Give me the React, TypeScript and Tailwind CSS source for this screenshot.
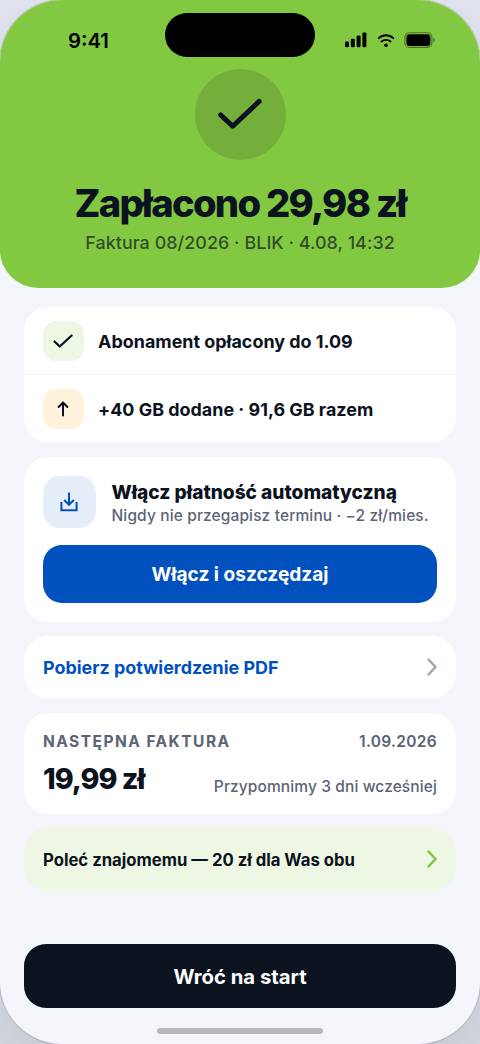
import type { ReactNode } from "react";

type BenefitProps = {
  tint: string;
  icon: ReactNode;
  text: string;
};

function Check({ className = "" }: { className?: string }) {
  return (
    <svg viewBox="0 0 91 91" fill="none" className={className}>
      <path
        d="M25.7 46 37.7 57.2 64.1 32.4"
        stroke="currentColor"
        strokeWidth="5"
        strokeLinecap="round"
        strokeLinejoin="round"
      />
    </svg>
  );
}

function Chevron({ className = "" }: { className?: string }) {
  return (
    <svg width="10" height="18" viewBox="0 0 10 18" fill="none" className={className}>
      <path d="M1.6 1.6 8.5 9 1.6 16.4" stroke="currentColor" strokeWidth="2.5" strokeLinecap="round" strokeLinejoin="round" />
    </svg>
  );
}

function Benefit({ tint, icon, text }: BenefitProps) {
  return (
    <div className="flex h-[67px] items-center gap-[14.5px] px-[19px]">
      <div className={`flex size-[40.6px] items-center justify-center rounded-[13px] ${tint}`}>{icon}</div>
      <span className="pt-[2px] text-[17.9px] leading-[22px] font-bold tracking-[0.001em]">{text}</span>
    </div>
  );
}

function StatusBar() {
  return (
    <div className="flex h-[57px] pt-[13px]">
      <div className="flex w-[165px] justify-center pt-[15px] pl-[12px] text-[20.3px] leading-[26px] font-semibold text-black">
        9:41
      </div>
      <div className="h-[44px] w-[150px] rounded-full bg-black" />
      <div className="flex flex-1 pt-[19px] pl-[30px] text-black">
        <svg width="22" height="16" viewBox="0 0 22 16" fill="currentColor">
          <rect x="0" y="9.6" width="4" height="5.6" rx="1.1" />
          <rect x="5.8" y="6.7" width="4" height="8.5" rx="1.1" />
          <rect x="11.6" y="3.6" width="4" height="11.6" rx="1.1" />
          <rect x="17.4" y="0.5" width="4" height="14.7" rx="1.1" />
        </svg>
        <svg width="18" height="16" viewBox="0 0 18 16" fill="none" stroke="currentColor" strokeWidth="1.9" strokeLinecap="round" className="ml-[10.2px]">
          <path d="M1.8 6.1C5.8 2.3 12.2 2.3 16.2 6.1" />
          <path d="M4.6 9.5C7 7.3 11 7.3 13.4 9.5" />
          <circle cx="9" cy="13.3" r="1.8" fill="currentColor" stroke="none" />
        </svg>
        <svg width="32" height="16" viewBox="0 0 32 16" fill="none" className="ml-[9.3px]">
          <rect x="0.9" y="0.7" width="27" height="14.7" rx="4.4" stroke="currentColor" strokeOpacity="0.45" strokeWidth="1.1" />
          <rect x="2.4" y="2.2" width="24" height="11.7" rx="3" fill="currentColor" />
          <path d="M29.4 5.8v4.6c1.7-.7 1.7-3.9 0-4.6Z" fill="currentColor" fillOpacity="0.5" />
        </svg>
      </div>
    </div>
  );
}

export default function App() {
  return (
    <div className="h-[1044px] w-[480px] overflow-hidden bg-linear-to-b from-[#e2e5ef] to-[#d6dae2] font-['Inter',sans-serif] text-[#0b1220]">
      <div className="flex h-full flex-col overflow-hidden rounded-[62px] bg-[#f3f5fa] shadow-[0_0_0_1px_rgba(0,0,0,0.12),0_24px_60px_rgba(20,30,50,0.1)]">
        <header className="h-[288.4px] shrink-0 rounded-b-[38px] bg-[#82c941]">
          <StatusBar />
          <div className="flex flex-col items-center pt-[12px]">
            <div className="flex size-[91px] items-center justify-center rounded-full bg-[#74af3c]">
              <Check className="size-[91px]" />
            </div>
            <h1 className="mt-[20px] text-[38.2px] leading-[46px] font-extrabold tracking-[-0.045em] whitespace-nowrap">
              Zapłacono 29,98 zł
            </h1>
            <p className="mt-[6px] text-[17.9px] leading-[22px] font-medium tracking-[0.003em] text-[#0b1220]/70">
              Faktura 08/2026 · BLIK · 4.08, 14:32
            </p>
          </div>
        </header>

        <main className="mt-[19px] flex flex-col gap-[14.4px] px-[24px]">
          <section className="rounded-[24px] bg-white">
            <Benefit
              tint="bg-[#edf7e3]"
              icon={<Check className="size-[40.6px]" />}
              text="Abonament opłacony do 1.09"
            />
            <div className="h-px bg-[#f1f3f7]" />
            <Benefit
              tint="bg-[#fff2db]"
              icon={
                <svg width="12" height="16" viewBox="0 0 12 16" fill="none" className="text-[#0b1220]">
                  <path d="M6 14.6V1.6M1.6 6 6 1.5 10.4 6" stroke="currentColor" strokeWidth="2" strokeLinecap="round" strokeLinejoin="round" />
                </svg>
              }
              text="+40 GB dodane · 91,6 GB razem"
            />
          </section>

          <section className="h-[165px] rounded-[24px] bg-white px-[19px] pt-[19px]">
            <div className="flex items-center gap-[16px]">
              <div className="flex size-[52.5px] shrink-0 items-center justify-center rounded-[17px] bg-[#e6eefa] text-[#0050be]">
                <svg width="18" height="20" viewBox="0 0 18 20" fill="none" stroke="currentColor" strokeWidth="2">
                  <path d="M9 .4v12M4.2 8 9 12.8 13.8 8" />
                  <path d="M1.4 10v8.2h15.2V10" />
                </svg>
              </div>
              <div className="pt-[3px] whitespace-nowrap">
                <h2 className="text-[19.1px] leading-[23px] font-extrabold">Włącz płatność automatyczną</h2>
                <p className="text-[15.5px] leading-[23px] font-medium tracking-[0.008em] text-[#5b6476]">
                  Nigdy nie przegapisz terminu · −2 zł/mies.
                </p>
              </div>
            </div>
            <button className="mt-[17px] flex h-[57.3px] w-full items-center justify-center rounded-[19px] bg-[#0050be] pt-px text-[19.1px] font-bold text-white">
              Włącz i oszczędzaj
            </button>
          </section>

          <section className="flex h-[62px] items-center justify-between rounded-[24px] bg-white px-[19px]">
            <span className="pt-[3px] text-[17.9px] font-bold text-[#0050be]">Pobierz potwierdzenie PDF</span>
            <Chevron className="text-[#9fa8b6]" />
          </section>

          <section className="h-[101.3px] rounded-[24px] bg-white px-[19px] pt-[18px]">
            <div className="flex items-center justify-between text-[15.5px] leading-[22px] font-semibold text-[#5b6476]">
              <span className="font-bold tracking-[0.095em]">NASTĘPNA FAKTURA</span>
              <span className="tracking-[0.02em]">1.09.2026</span>
            </div>
            <div className="mt-[9px] flex items-end justify-between">
              <span className="text-[28.7px] leading-[34px] font-extrabold tracking-[-0.035em]">19,99 zł</span>
              <span className="-mb-[2px] text-[15.5px] leading-[22px] font-medium tracking-[0.007em] text-[#5b6476]">Przypomnimy 3 dni wcześniej</span>
            </div>
          </section>

          <section className="flex h-[62.4px] items-center justify-between rounded-[24px] bg-[#edf7e3] px-[19px]">
            <span className="pt-[2px] text-[16.7px] font-bold">Poleć znajomemu — 20 zł dla Was obu</span>
            <Chevron className="text-[#82c941]" />
          </section>
        </main>

        <footer className="mt-auto flex flex-col items-center px-[24px] pb-[9.7px]">
          <button className="h-[64.5px] w-full rounded-[22px] bg-[#0b1220] pt-[2px] text-[20.3px] font-bold text-white">
            Wróć na start
          </button>
          <div className="mt-[20px] h-[6px] w-[166px] rounded-full bg-[#b6b8bc]" />
        </footer>
      </div>
    </div>
  );
}
